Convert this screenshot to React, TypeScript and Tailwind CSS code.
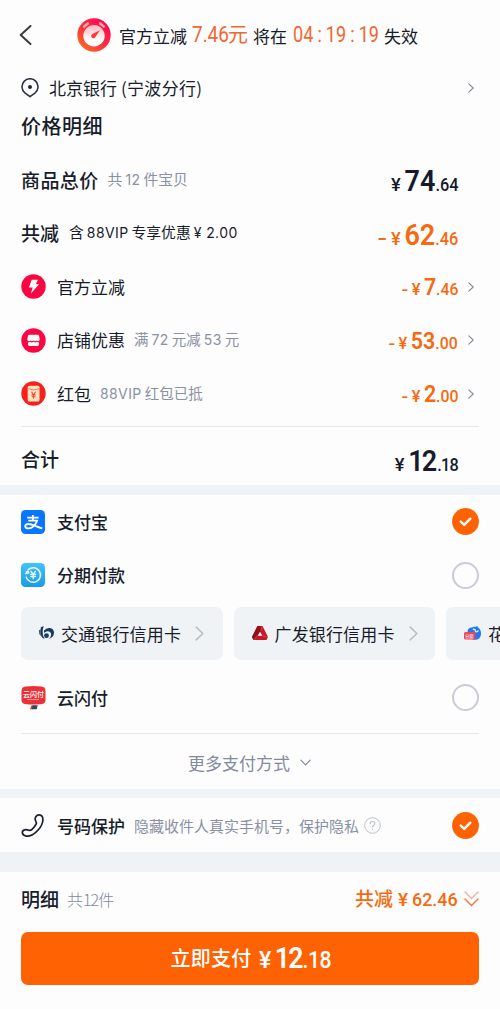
import type { ReactNode } from 'react';

const CJK = "font-['Noto_Sans_CJK_SC',sans-serif]";
const NUM = "font-[Roboto,'Noto_Sans_CJK_SC',sans-serif]";

function Chevron({ className = '' }: { className?: string }) {
  return (
    <svg className={className} viewBox="0 0 6 10" fill="none" stroke="currentColor" strokeWidth="1.1" strokeLinejoin="round" strokeLinecap="round">
      <path d="M.8.8 5.2 5 .8 9.2" />
    </svg>
  );
}

function Latin({ children, className = 'mx-[3px]' }: { children: ReactNode; className?: string }) {
  return <span className={`font-[Inter,sans-serif] text-[14px] tracking-[0.4px] ${className}`}>{children}</span>;
}

type PriceProps = { whole: string; cents: string; minus?: boolean; large?: boolean; narrow?: boolean; className?: string };

function Price({ whole, cents, minus, large, narrow, className = '' }: PriceProps) {
  return (
    <span className={`${NUM} flex origin-right scale-x-[0.93] items-baseline font-medium leading-none ${minus ? 'text-[#f56a10]' : 'text-[#151b2c]'} ${className}`}>
      {minus && <span className={large ? 'mr-[7px] scale-x-150 text-[20px]' : 'mr-[5px] scale-x-125 text-[17px]'}>-</span>}
      <span className={large ? 'mr-[4px] origin-right scale-x-110 text-[18px]' : 'mr-[4px] origin-right scale-x-110 text-[16px]'}>¥</span>
      <span className={large ? (narrow ? 'text-[29px] font-semibold tracking-[-2px]' : 'text-[29px] font-semibold') : 'text-[23px] font-semibold'}>{whole}</span>
      <span className={large ? (narrow ? 'ml-[2px] text-[17.5px] tracking-[-0.8px]' : 'text-[17.5px]') : 'text-[17px]'}>.{cents}</span>
    </span>
  );
}

function Radio({ checked }: { checked?: boolean }) {
  return checked ? (
    <svg className="size-[27px] shrink-0" viewBox="0 0 27 27" fill="none">
      <circle cx="13.5" cy="13.5" r="13.4" fill="#ff6203" />
      <path d="m8.7 13.5 3.5 3.4 6.2-6.2" stroke="#fff" strokeWidth="2.4" strokeLinecap="round" strokeLinejoin="round" />
    </svg>
  ) : (
    <span className="size-[27px] shrink-0 rounded-full border-2 border-[#c9ccd6]" />
  );
}

function Row({ children, className = '' }: { children: ReactNode; className?: string }) {
  return <div className={`flex shrink-0 items-center px-[21px] ${className}`}>{children}</div>;
}

function TimerIcon() {
  return (
    <svg className="size-[34px] shrink-0" viewBox="0 0 34 34" fill="none">
      <defs>
        <linearGradient id="timer" x1="5" y1="32" x2="28" y2="4" gradientUnits="userSpaceOnUse">
          <stop stopColor="#ff6a22" />
          <stop offset=".45" stopColor="#f9363c" />
          <stop offset="1" stopColor="#ff0653" />
        </linearGradient>
        <linearGradient id="dial" x1="17" y1="7" x2="17" y2="29" gradientUnits="userSpaceOnUse">
          <stop stopColor="#ffb9bb" />
          <stop offset=".7" stopColor="#fff" />
        </linearGradient>
      </defs>
      <circle cx="17" cy="17" r="16.7" fill="url(#timer)" />
      <path d="m7.2 8.5 3.6-3M23.2 5.5l3.6 3" stroke="#ffa5a2" strokeWidth="2.6" strokeLinecap="round" />
      <circle cx="17" cy="17.7" r="10.7" fill="url(#dial)" />
      <path d="m23 12.200-4.300 6.300a2.300 2.300 0 1 1-2.900-2.700Z" fill="#f53c43" />
    </svg>
  );
}

function PinIcon() {
  return (
    <svg className="h-[20px] w-[18px] shrink-0" viewBox="0 0 18 20" fill="none">
      <path d="M4.1 15.1A8 8 0 1 1 13.9 15.1L9 18.7Z" stroke="#2e3240" strokeWidth="1.6" strokeLinejoin="round" />
      <circle cx="9" cy="9" r="2" fill="#202532" />
    </svg>
  );
}

function FlashIcon() {
  return (
    <svg className="size-[25px] shrink-0" viewBox="0 0 25 25">
      <circle cx="12.5" cy="12.5" r="12.2" fill="#fb0542" />
      <path d="M10.7 5.7h6.2l-2.1 4.5h3.3l-8.2 9.3 1.8-6.1H7.9Z" fill="#fff" />
    </svg>
  );
}

function ShopIcon() {
  return (
    <svg className="size-[25px] shrink-0" viewBox="0 0 25 25">
      <circle cx="12.5" cy="12.5" r="12.2" fill="#fb0542" />
      <path d="M8.600 6.700h7.800q1.500 0 1.700 1.400l.6 3.200q0 1.900-1.600 1.900-1 0-1.500-.8-.6.8-1.500.8t-1.600-.8q-.6.8-1.600.8t-1.500-.8q-.6.8-1.500.8-1.600 0-1.600-1.900l.6-3.200q.2-1.400 1.700-1.400Z" fill="#fff" />
      <path d="M7 14.400q1.300 0 2-.7.700.7 1.700.7t1.800-.7q.7.7 1.700.7t1.700-.7q.7.700 2.100.7v2.200q0 1.400-1.400 1.400H8.400Q7 18 7 16.600Z" fill="#fff" />
    </svg>
  );
}

function PacketIcon() {
  return (
    <svg className="size-[25px] shrink-0" viewBox="0 0 25 25" fill="none">
      <circle cx="12.5" cy="12.5" r="12.2" fill="#f7201d" />
      <rect x="6.7" y="4.8" width="11.8" height="15.7" rx="1.5" fill="#ffe3c2" />
      <path d="M6.7 7.6q5.9 2.7 11.8 0" stroke="#f47b5e" />
      <path d="m10.5 10.8 2.1 2.9 2.1-2.9M12.6 13.7v3.8M10.600 13.900h4M10.600 15.800h4" stroke="#e94b34" strokeWidth="1.1" />
    </svg>
  );
}

function AlipayIcon() {
  return (
    <svg className="size-[24px] shrink-0" viewBox="0 0 24 24" fill="none">
      <rect width="24" height="24" rx="4.5" fill="#0876fe" />
      <path d="M6.200 7.700h11.400M11.900 5v5.300M7.300 10.600h8.900c-1.300 4.200-5 7.800-8.700 7.800-4.400 0-4.300-4.400-.3-4.400 4.200 0 8.300 2.900 14 4.300" stroke="#fff" strokeWidth="1.8" strokeLinejoin="round" />
    </svg>
  );
}

function InstallmentIcon() {
  return (
    <svg className="size-[24px] shrink-0" viewBox="0 0 24 24" fill="none">
      <defs>
        <linearGradient id="installment" x1="12" y1="0" x2="12" y2="24" gradientUnits="userSpaceOnUse">
          <stop stopColor="#42c3fa" />
          <stop offset="1" stopColor="#189bea" />
        </linearGradient>
      </defs>
      <rect width="24" height="24" rx="4.5" fill="url(#installment)" />
      <path d="M7.3 6.6a7.300 7.300 0 1 1-2.100 7.500" stroke="#eafaff" strokeWidth="1.5" strokeLinecap="round" />
      <path d="M3.8 11.4q.6-3.300 3.300-4.700l1.700 3.600Z" fill="#eafaff" />
      <path d="m9.7 8 2.500 3.400L14.700 8M12.200 11.400v4.800M9.300 11.500h5.800M9.300 13.600h5.800" stroke="#eafaff" strokeWidth="1.3" />
    </svg>
  );
}

function BocomIcon() {
  return (
    <svg className="h-[14px] w-[15px] shrink-0" viewBox="0 0 15 14">
      <path d="M1.800 1.200 4.700 0 3.800 3.800Q3.100 9.500 5.800 13 1.800 12.200 1.500 7Z" fill="#163c66" />
      <path d="M0 4.500 1.600 3.300v6.900Q0 8.500 0 4.500ZM5 4.600Q7.300 1.500 10.700 2q4.300.8 4.300 4.600 0 4.700-5.100 6.300 2.400-2.100 2.300-4.800Q11.800 5.500 9 5.300 6.600 5.200 5 7Z" fill="#163c66" />
      <circle cx="7.500" cy="9.700" r="2.400" fill="#163c66" />
    </svg>
  );
}

function CgbIcon() {
  return (
    <svg className="h-[14px] w-[16px] shrink-0" viewBox="0 0 16 14">
      <path d="M5.500 0h5L16 11 14.500 14h-13L0 11Z" fill="#c71826" />
      <path d="M5.500 0h2.800l1 4.600L5.300 10 1.500 14 0 11Z" fill="#8f0f1c" />
      <path d="m8 5.800 2.400 4H5.600Z" fill="#f4eef0" />
      <path d="M10.500 0 8.600 5M16 11l-5.300-1M1.500 14l3.700-4.200" stroke="#e96068" strokeWidth=".6" />
    </svg>
  );
}

function HuabeiIcon() {
  return (
    <span className="relative h-[14px] w-[17px] shrink-0">
      <svg className="size-full" viewBox="0 0 17 14">
        <path d="M3.500 5.500Q4 1.500 8 1.600 9 .3 12 .8L13.400 0l.5 1.500Q17 3.200 17 7.500q0 6.300-6.300 6.300-3.700 0-5-3Z" fill="#2376ee" />
        <path d="M8.800 3.200q2.500-.2 2.500 1.500 0 1.200 1.400 1.200 1.300 0 1.400-1.600" stroke="#d9eaff" strokeWidth="1.400" fill="none" />
        <rect y="6" width="11.500" height="7.500" rx="1.500" fill="#e6475b" />
      </svg>
      <span className={`${CJK} absolute left-[1px] top-[6px] w-[10px] origin-left scale-x-[0.85] whitespace-nowrap text-[5px] leading-[7px] text-white`}>分期</span>
    </span>
  );
}

function UnionIcon() {
  return (
    <span className="relative h-[24px] w-[25px] shrink-0">
      <svg className="size-full" viewBox="0 0 25 24">
        <path d="M4.500.6Q12.500-.4 20.500.6q4 .4 4 4.400v9q0 3.400-3.400 3.900-8.600 1-17.200 0Q.5 17.400.5 14V5q0-4 4-4.400Z" fill="#eb3036" />
        <path d="M10.500 19.200H13l-1.300 4H9Z" fill="#c73c49" />
        <path d="M12 19.200h4.700l-1 4h-4.900Z" fill="#244d65" />
      </svg>
      <span className={`${CJK} absolute left-[2px] top-[3px] whitespace-nowrap text-[7px] font-medium leading-[10px] text-white`}>云闪付</span>
      <span className="absolute left-[6px] top-[13px] h-px w-[12px] bg-[#f59a98]" />
    </span>
  );
}

function PhoneIcon() {
  return (
    <svg className="h-[25px] w-[24px] shrink-0" viewBox="0 0 24 25" fill="none" stroke="#1b2030" strokeWidth="1.7" strokeLinejoin="round">
      <path d="M15.300 3.100q2.700-2.300 5.200-.4 2.200 2 1 6.700-1.300 5.200-6.500 9.800-5 4.600-9.800 3.900Q1.500 22.200 1.300 19.600q0-2.300 2.400-2.800 2.300-.3 4.200.5 1.500.6 3.400-1.200 2.700-2.500 3.800-4.900.7-1.500-.2-2.800-1.700-3 .4-5.300Z" />
    </svg>
  );
}

function BankCard({ icon, name }: { icon: ReactNode; name: string }) {
  return (
    <div className="flex h-[53px] w-[201.5px] shrink-0 items-center rounded-[7px] bg-[#f0f3f6] pl-[18px]">
      {icon}
      <span className="ml-[7px] pt-[1px] text-[17px] tracking-[0.15px] whitespace-nowrap">{name}</span>
      <Chevron className="ml-[14px] h-[15px] w-[9px] shrink-0 text-[#b9bdc5]" />
    </div>
  );
}

type DiscountProps = { icon: ReactNode; name: string; note?: ReactNode; whole: string; cents: string };

function Discount({ icon, name, note, whole, cents }: DiscountProps) {
  return (
    <Row className="h-[53.500px]">
      {icon}
      <span className="ml-[11px] pb-[1px] text-[17px]">{name}</span>
      {note && <span className="ml-[9px] pb-[1px] text-[14.500px] text-[#8991a3]">{note}</span>}
      <Price whole={whole} cents={cents} minus className="ml-auto pt-[2px]" />
      <Chevron className="ml-[10px] mr-[5px] h-[10px] w-[6px] text-[#858b99]" />
    </Row>
  );
}

export default function App() {
  return (
    <div className={`${CJK} flex h-[1009px] w-[500px] flex-col overflow-hidden bg-[#fdfdfd] leading-none text-[#171c2b]`}>
      <Row className="h-[71px] whitespace-nowrap pb-[1px]">
        <svg className="-ml-[2px] h-[20px] w-[13px]" viewBox="0 0 13 20" fill="none" stroke="#3b3c3e" strokeWidth="2" strokeLinecap="round" strokeLinejoin="round">
          <path d="m11.500 1-9.800 9 9.800 9" />
        </svg>
        <span className="ml-[45px] flex"><TimerIcon /></span>
        <span className="ml-[8px] text-[17px]">官方立减</span>
        <span className="ml-[5px] flex items-baseline text-[#f26631]">
          <span className="w-[36px]"><span className={`${NUM} inline-block origin-left scale-x-[0.86] text-[22px]`}>7.46</span></span>
          <span className="text-[20px]">元</span>
        </span>
        <span className="ml-[5px] text-[17px]">将在</span>
        <span className="ml-[6px] w-[84px]">
          <span className={`${NUM} inline-block origin-left scale-x-[0.82] text-[22px] text-[#f26631]`}>04<span className="mx-[5px]">:</span>19<span className="mx-[5px]">:</span>19</span>
        </span>
        <span className="ml-[7px] text-[17px]">失效</span>
      </Row>

      <Row className="h-[34px]">
        <PinIcon />
        <span className="ml-[10px] pb-[2px] text-[17px]">北京银行<span className="ml-[4px] tracking-[0.300px]">(宁波分行)</span></span>
        <Chevron className="ml-auto mr-[5px] h-[10px] w-[6px] text-[#858b99]" />
      </Row>
      <Row className="h-[43px] pb-[2px] text-[20px] font-medium"><span className="tracking-[0.500px]">价格明细</span></Row>
      <Row className="h-[65px]">
        <span className="pb-[2px] text-[19px] font-medium tracking-[0.400px]">商品总价</span>
        <span className="ml-[9px] pb-[2px] text-[14.800px] text-[#8991a3]">共<Latin>12</Latin>件宝贝</span>
        <Price whole="74" cents="64" large className="ml-auto mr-[21px] pt-[2px]" />
      </Row>
      <Row className="h-[42px]">
        <span className="pb-[3px] text-[19px] font-medium">共减</span>
        <span className="ml-[10px] pb-[3px] text-[14.800px]">含<Latin className="mx-[3px]">88VIP</Latin>专享优惠<Latin className="ml-[3px] mr-[3px]">¥ 2.00</Latin></span>
        <Price whole="62" cents="46" minus large className="ml-auto mr-[21px] pt-[2px]" />
      </Row>
      <div className="flex shrink-0 flex-col pt-[5px]">
        <Discount icon={<FlashIcon />} name="官方立减" whole="7" cents="46" />
        <Discount icon={<ShopIcon />} name="店铺优惠" note={<>满<Latin>72</Latin>元减<Latin>53</Latin>元</>} whole="53" cents="00" />
        <Discount icon={<PacketIcon />} name="红包" note={<><Latin className="mr-[3px]">88VIP</Latin>红包已抵</>} whole="2" cents="00" />
      </div>
      <div className="mx-[21px] mt-[5px] h-px shrink-0 bg-[#e6e8eb]" />
      <Row className="h-[58px] pt-[8px]">
        <span className="pb-[3px] text-[19px] font-medium">合计</span>
        <Price whole="12" cents="18" large narrow className="ml-auto mr-[21px] pt-[3px]" />
      </Row>

      <div className="h-[10px] shrink-0 bg-[#f0f3f6]" />
      <Row className="h-[54px]">
        <AlipayIcon />
        <span className="ml-[12px] text-[17px] font-medium">支付宝</span>
        <span className="ml-auto flex"><Radio checked /></span>
      </Row>
      <Row className="h-[53px]">
        <InstallmentIcon />
        <span className="ml-[12px] pb-[1px] text-[17px] font-medium">分期付款</span>
        <span className="ml-auto flex"><Radio /></span>
      </Row>
      <div className="mt-[5px] flex shrink-0 gap-[11px] overflow-hidden pl-[21px]">
        <BankCard icon={<BocomIcon />} name="交通银行信用卡" />
        <BankCard icon={<CgbIcon />} name="广发银行信用卡" />
        <BankCard icon={<HuabeiIcon />} name="花呗分期" />
      </div>
      <Row className="h-[73px] pt-[3px]">
        <UnionIcon />
        <span className="ml-[11px] text-[17px] font-medium">云闪付</span>
        <span className="ml-auto flex"><Radio /></span>
      </Row>
      <div className="mx-[21px] h-px shrink-0 bg-[#e6e8eb]" />
      <div className="flex h-[55px] shrink-0 items-center justify-center pr-[4px] pt-[3px] text-[17px] text-[#828a9c]">
        更多支付方式
        <span className="ml-[12px] flex w-[6px] justify-center"><Chevron className="h-[11px] w-[7px] shrink-0 rotate-90" /></span>
      </div>

      <div className="h-[9px] shrink-0 bg-[#f0f3f6]" />
      <Row className="h-[54px] pt-[1px]">
        <PhoneIcon />
        <span className="ml-[12px] text-[17px] font-medium">号码保护</span>
        <span className="ml-[9px] text-[15px] text-[#8991a3]">隐藏收件人真实手机号，保护隐私</span>
        <svg className="ml-[5px] size-[17px] shrink-0" viewBox="0 0 17 17" fill="none" stroke="#bbc0c9" strokeWidth="1">
          <circle cx="8.500" cy="8.500" r="7.800" />
          <path d="M6.200 6.700q0-2.200 2.300-2.200t2.300 2q0 1.100-1.200 1.900-1.100.7-1.100 1.800M8.500 11.500v1.200" strokeWidth="1.200" />
        </svg>
        <span className="ml-auto flex"><Radio checked /></span>
      </Row>
      <div className="h-[20px] shrink-0 bg-[#f0f3f6]" />

      <Row className="h-[54px]">
        <span className="text-[19px] font-medium">明细</span>
        <span className="ml-[8px] text-[16px] font-light text-[#828a9c]">共<span className="tracking-[-1px]">12</span>件</span>
        <span className="ml-auto flex items-baseline font-medium text-[#f56a10]">
          <span className="text-[19px]">共减</span>
          <span className={`${NUM} ml-[5px] text-[19px]`}>¥</span>
          <span className="ml-[4px] w-[46px]"><span className={`${NUM} inline-block origin-left scale-x-[0.94] text-[19px]`}>62.46</span></span>
        </span>
        <svg className="ml-[6px] h-[16px] w-[15px]" viewBox="0 0 15 16" fill="none" stroke="#ee7542" strokeWidth="1.400" strokeLinecap="round">
          <path d="m1 1 6.500 6.500L14 1" opacity=".55" />
          <path d="m1 8 6.500 6.500L14 8" />
        </svg>
      </Row>
      <button className="mx-[21px] mt-[6px] flex h-[53px] shrink-0 items-center justify-center rounded-[7px] bg-[#ff6203] text-white">
        <span className="text-[20px] font-medium tracking-[0.300px]">立即支付</span>
        <span className="ml-[7px] w-[71px]">
          <span className={`${NUM} flex w-[80px] origin-left scale-x-[0.92] items-baseline font-medium leading-none`}>
            <span className="origin-left scale-x-110 text-[23px]">¥</span>
            <span className="ml-[5px] text-[29px] font-semibold tracking-[-2px]">12</span>
            <span className="ml-[1px] text-[23px] tracking-[-0.500px]">.18</span>
          </span>
        </span>
      </button>
    </div>
  );
}
